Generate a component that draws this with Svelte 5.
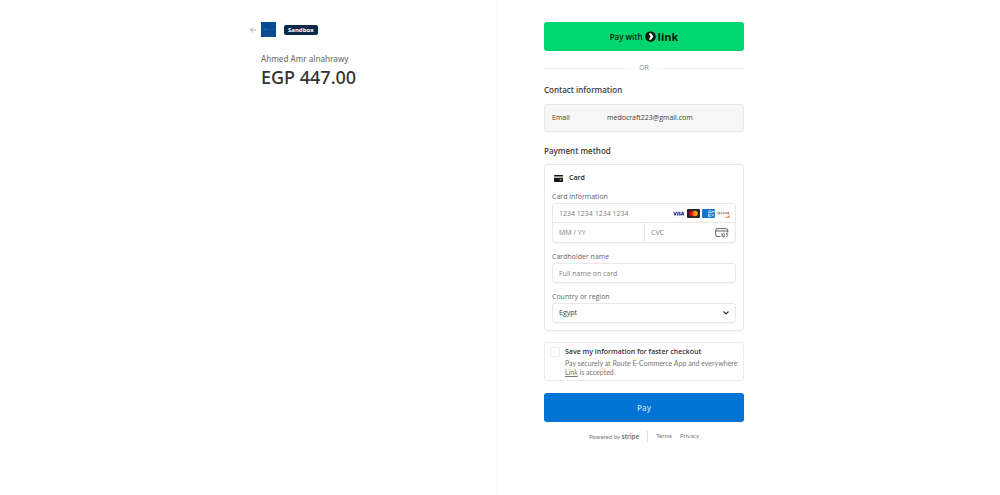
<script lang="ts">
	type Country = {
		code: string;
		name: string;
	};

	const COUNTRIES: Country[] = [{ code: 'EG', name: 'Egypt' }];

	let cardNumber = $state('');
	let expiry = $state('');
	let cvc = $state('');
	let cardholder = $state('');
	let country = $state('EG');
	let saveInfo = $state(false);

	function pay(event: SubmitEvent): void {
		event.preventDefault();
	}
</script>

<div class="checkout">
	<aside class="summary">
		<div class="summary-content">
			<header class="business">
				<a class="back" href="#back" aria-label="Back">
					<svg viewBox="0 0 8 8"><path d="M4 1.500 1.500 4 4 6.500M1.500 4H7" /></svg>
				</a>
				<svg class="business-logo" viewBox="0 0 15 15" aria-hidden="true">
					<rect width="15" height="15" fill="#084a94" />
					<path d="M3 8.500 4 6.500l1 2M6 7.500h1.500M8.500 7.500H10M11 7.500h1.500" stroke="#3478b5" stroke-width=".6" fill="none" />
				</svg>
				<span class="badge">Sandbox</span>
			</header>
			<p class="product">Ahmed Amr alnahrawy</p>
			<p class="amount">EGP 447.00</p>
		</div>
	</aside>

	<main class="payment">
		<form class="payment-form" onsubmit={pay}>
			<button type="button" class="btn btn-link">
				<span>Pay with</span>
				<svg viewBox="0 0 11 11" aria-hidden="true">
					<circle cx="5.500" cy="5.500" r="5.300" fill="#011e0f" />
					<path d="M4 2.300h2l2.400 3.200L6 8.700H4c.2-1 .9-2.300 1.700-3.200C4.900 4.600 4.200 3.300 4 2.300z" fill="#fff" />
				</svg>
				<span class="link-word">link</span>
			</button>

			<div class="divider"><span>OR</span></div>

			<h2>Contact information</h2>
			<div class="contact">
				<span>Email</span>
				<span>medocraft223@gmail.com</span>
			</div>

			<h2>Payment method</h2>
			<section class="card">
				<div class="card-title">
					<svg viewBox="0 0 9 7" aria-hidden="true">
						<path d="M.7 0h7.600a.7.700 0 0 1 .7.700V1.500H0V.7A.7.700 0 0 1 .7 0zM0 2.700h9v3.600a.7.700 0 0 1-.7.700H.7a.7.700 0 0 1-.7-.7z" fill="#151515" />
						<path d="M5.800 4.800h1.700" stroke="#fff" stroke-width=".8" />
					</svg>
					<span>Card</span>
				</div>

				<fieldset>
					<legend>Card information</legend>
					<div class="card-fields">
						<div class="field number">
							<input bind:value={cardNumber} aria-label="Card number" placeholder="1234 1234 1234 1234" inputmode="numeric" />
							<div class="brands">
								<svg viewBox="0 0 13 9" role="img" aria-label="Visa">
									<rect x=".2" y=".2" width="12.600" height="8.600" rx="1" fill="#fff" stroke="#f3f3f8" stroke-width=".4" />
									<path d="M1.200 2.700h1.200l.6 2.500 1-2.500h1.100L3.600 6.400H2.400zM5.500 2.700h1l-.7 3.700h-1zM8.900 2.900l-.2.900c-.6-.3-1.100-.2-1.100.1 0 .4 1.200.5 1.200 1.300 0 1.200-1.400 1.500-2.600 1l.2-.9c.7.300 1.200.3 1.200 0 0-.4-1.100-.5-1.100-1.400 0-1 1.200-1.500 2.400-1zM10 2.700h1.200l1 3.700h-1l-.1-.5H9.900l-.3.500h-1zm.5 1.300-.4 1.100h.7z" fill="#2c2f9b" />
								</svg>
								<svg viewBox="0 0 13 9" role="img" aria-label="Mastercard">
									<rect width="13" height="9" rx="1" fill="#252525" />
									<circle cx="4.900" cy="4.500" r="2.700" fill="#eb001b" />
									<circle cx="8.100" cy="4.500" r="2.700" fill="#f79e1b" />
									<path d="M6.500 2.300a2.700 2.700 0 0 1 0 4.400 2.700 2.700 0 0 1 0-4.400z" fill="#ff5f00" />
								</svg>
								<svg viewBox="0 0 13 9" role="img" aria-label="American Express">
									<rect width="13" height="9" rx="1" fill="#0f76cf" />
									<path d="M6 4.200 7.200 1.500h1.200l1.200 2.700M6.700 3.400h2.200M10.200 4.200V1.700l1 1.300 1-1.300v2.500M9 5H6.500v2.600H9M6.500 6.300h2.200M9.500 5l2.700 2.700M12.200 5 9.500 7.700" stroke="#d7ecfc" stroke-width=".7" fill="none" />
								</svg>
								<svg viewBox="0 0 13 9" role="img" aria-label="Discover">
									<rect x=".2" y=".2" width="12.600" height="8.600" rx="1" fill="#fff" stroke="#f3f3f3" stroke-width=".4" />
									<path d="M12.800 5.800v2a1 1 0 0 1-1 1H7c2.700-.6 4.400-1.700 5.800-3z" fill="#f58b3b" />
									<path d="M1 3.200v2h.5a1 1 0 0 0 0-2zM3 3.200v2M5 3.400c-.8-.5-1.300.4-.5.7s.4 1.300-.5.9M7 3.500c-1.500-.7-1.500 2 0 1.400M9.200 3.200l.6 1.900.6-1.900M12 3.300h-.8v1.800h.8M11.200 4.200h.7" stroke="#44444c" stroke-width=".5" fill="none" />
									<circle cx="8" cy="4.200" r=".9" fill="#f58b3b" />
								</svg>
							</div>
						</div>
						<div class="field expiry">
							<input bind:value={expiry} aria-label="Expiration" placeholder="MM / YY" inputmode="numeric" />
						</div>
						<div class="field cvc">
							<input bind:value={cvc} aria-label="CVC" placeholder="CVC" inputmode="numeric" />
							<svg class="cvc-icon" viewBox="0 0 14 10" aria-hidden="true">
								<path d="M5.500 8.500H2A1.300 1.300 0 0 1 .7 7.200V2A1.300 1.300 0 0 1 2 .7h9.500A1.300 1.300 0 0 1 12.800 2v2.500M.7 3h12.100" />
								<path d="M6.500 6l.7-.5V9M8.300 5.800c1.500-.7 1.700.7 0 2.800h1.500M11 5.600h1.500l-.8 1.200c1.300 0 1.100 2.200-.8 1.600" />
							</svg>
						</div>
					</div>
				</fieldset>

				<label for="cardholder">Cardholder name</label>
				<input id="cardholder" class="control" bind:value={cardholder} placeholder="Full name on card" />

				<label for="country">Country or region</label>
				<div class="select-wrap">
					<select id="country" class="control" bind:value={country}>
						{#each COUNTRIES as c (c.code)}
							<option value={c.code}>{c.name}</option>
						{/each}
					</select>
					<svg viewBox="0 0 8 6" aria-hidden="true"><path d="m1.500 1.500 2.500 2.500 2.500-2.500" /></svg>
				</div>
			</section>

			<section class="save">
				<input type="checkbox" id="save-info" bind:checked={saveInfo} />
				<div>
					<label for="save-info">Save my information for faster checkout</label>
					<p>Pay securely at Route E-Commerce App and everywhere <a href="#link">Link</a> is accepted.</p>
				</div>
			</section>

			<button type="submit" class="btn btn-pay">Pay</button>
		</form>

		<footer>
			<a class="powered" href="#stripe">Powered by <strong>stripe</strong></a>
			<nav>
				<a href="#terms">Terms</a>
				<a href="#privacy">Privacy</a>
			</nav>
		</footer>
	</main>
</div>

<style>
	:global(body) {
		margin: 0;
		background: #fff;
	}

	.checkout {
		display: grid;
		grid-template-columns: 1fr 1fr;
		min-height: 100vh;
		box-sizing: border-box;
		font-family: 'Segoe UI', 'Open Sans', sans-serif;
		font-size: 7px;
		line-height: 10px;
		color: #3c3c3c;
	}

	.checkout * {
		box-sizing: border-box;
	}

	p,
	h2 {
		margin: 0;
	}

	button,
	input,
	select {
		font: inherit;
		color: inherit;
	}

	/* Left side: what is being paid */
	.summary {
		display: flex;
		justify-content: flex-end;
		padding: 22px 40px;
	}

	.summary-content {
		width: 100%;
		max-width: 199px;
	}

	.business {
		display: flex;
		align-items: center;
		height: 15px;
		margin-left: -12px;
	}

	.back {
		display: flex;
		width: 12px;
	}

	.back svg {
		width: 8px;
		height: 8px;
		fill: none;
		stroke: #999;
		stroke-width: 0.8;
	}

	.business-logo {
		width: 15px;
		height: 15px;
	}

	.badge {
		margin-left: 8px;
		padding: 0 4px;
		border-radius: 2px;
		background: #0b2a4a;
		color: #fff;
		font-size: 6px;
		font-weight: 700;
	}

	.product,
	.amount {
		font-family: 'Segoe UI', 'Noto Sans', sans-serif;
		font-weight: 500;
	}

	.product {
		margin-top: 16px;
		font-size: 8px;
		line-height: 12px;
		color: #777;
	}

	.amount {
		font-size: 18px;
		line-height: 24px;
		color: #333;
	}

	/* Right side: the payment form */
	.payment {
		min-width: 0;
		margin-left: -2px;
		padding: 22px 46px;
		box-shadow: -2px 0 3px rgba(0, 0, 0, 0.02);
	}

	.payment-form {
		max-width: 200px;
	}

	.btn {
		display: flex;
		align-items: center;
		justify-content: center;
		width: 100%;
		height: 29px;
		padding: 0;
		border: none;
		border-radius: 3px;
		font-size: 8px;
		font-weight: 600;
		cursor: pointer;
	}

	.btn-link {
		gap: 2px;
		background: #00d66f;
		color: #011e0f;
	}

	.btn-link svg {
		width: 11px;
		height: 11px;
	}

	.link-word {
		font-size: 11px;
		font-weight: 700;
	}

	.btn-pay {
		margin-top: 12px;
		background: #0074d4;
		color: #b9dcf7;
	}

	.divider {
		display: flex;
		align-items: center;
		gap: 8px;
		margin: 12px 0 11px;
		color: #888;
	}

	.divider::before,
	.divider::after {
		content: '';
		flex: 1;
		height: 1px;
		background: #f0f0f0;
	}

	h2 {
		font-size: 8px;
		line-height: 12px;
		font-weight: 600;
		color: #3c3c3c;
	}

	.contact {
		display: grid;
		grid-template-columns: 55px 1fr;
		align-items: center;
		height: 28px;
		margin: 8px 0 13px;
		padding: 0 7px;
		border: 1px solid #e8e8e8;
		border-radius: 3px;
		background: #f6f6f6;
	}

	.card {
		margin-top: 7px;
		padding: 8px 7px 7px;
		border: 1px solid #e8e8e8;
		border-radius: 4px;
		box-shadow: 0 1px 1px rgba(0, 0, 0, 0.03);
	}

	.card-title {
		display: flex;
		align-items: center;
		gap: 6px;
		padding-left: 2px;
		margin-bottom: 9px;
		font-weight: 600;
		color: #222;
	}

	.card-title svg {
		width: 9px;
		height: 7px;
	}

	fieldset {
		min-width: 0;
		margin: 0;
		padding: 0;
		border: none;
	}

	legend,
	label {
		display: block;
		padding: 0;
		font-weight: 500;
		color: #666;
	}

	.card label {
		margin: 9px 0 1px;
	}

	legend {
		margin-bottom: 1px;
	}

	.card-fields {
		display: grid;
		grid-template-columns: repeat(2, minmax(0, 1fr));
		border: 1px solid #e8e8e8;
		border-radius: 3px;
		box-shadow: 0 1px 1px rgba(0, 0, 0, 0.03);
	}

	.field {
		display: flex;
		align-items: center;
		height: 19px;
		padding: 0 6px;
	}

	.field input {
		flex: 1;
		min-width: 0;
		height: 100%;
		padding: 0;
		border: none;
		background: transparent;
		outline: none;
	}

	.number {
		grid-column: 1 / -1;
		padding-right: 5px;
		border-bottom: 1px solid #e8e8e8;
	}

	.cvc {
		border-left: 1px solid #e8e8e8;
	}

	::placeholder {
		color: #808080;
		opacity: 1;
	}

	.brands {
		display: flex;
		gap: 2px;
	}

	.brands svg {
		width: 13px;
		height: 9px;
	}

	.cvc-icon {
		width: 14px;
		height: 10px;
		fill: none;
		stroke: #555;
		stroke-width: 0.9;
	}

	.control {
		display: block;
		width: 100%;
		height: 20px;
		padding: 0 6px;
		border: 1px solid #e8e8e8;
		border-radius: 3px;
		background: #fff;
		box-shadow: 0 1px 1px rgba(0, 0, 0, 0.03);
	}

	.select-wrap {
		display: grid;
		align-items: center;
	}

	.select-wrap > * {
		grid-area: 1 / 1;
	}

	.select-wrap select {
		appearance: none;
	}

	.select-wrap svg {
		justify-self: end;
		width: 8px;
		height: 6px;
		margin-right: 6px;
		fill: none;
		stroke: #333;
		stroke-width: 1.2;
		pointer-events: none;
	}

	.save {
		display: flex;
		gap: 5px;
		margin-top: 11px;
		padding: 4px 5px 3px;
		border: 1px solid #ebebeb;
		border-radius: 3px;
	}

	.save input {
		flex: none;
		appearance: none;
		width: 10px;
		height: 10px;
		margin: 0;
		border: 1px solid #ebebeb;
		border-radius: 2px;
		background: #fff;
	}

	.save input:checked {
		background: #0074d4;
	}

	.save label {
		margin-bottom: 2px;
		font-weight: 600;
		color: #333;
	}

	.save p {
		font-family: Lato, sans-serif;
		line-height: 9px;
		color: #777;
	}

	.save a {
		color: inherit;
	}

	footer {
		display: flex;
		justify-content: center;
		max-width: 200px;
		margin-top: 9px;
		font-family: Lato, sans-serif;
		font-size: 6px;
		color: #777;
	}

	footer a {
		color: inherit;
		text-decoration: none;
	}

	.powered {
		padding-right: 8px;
		border-right: 1px solid #ddd;
	}

	.powered strong {
		font-size: 7px;
	}

	nav {
		display: flex;
		gap: 8px;
		padding-left: 8px;
	}
</style>
